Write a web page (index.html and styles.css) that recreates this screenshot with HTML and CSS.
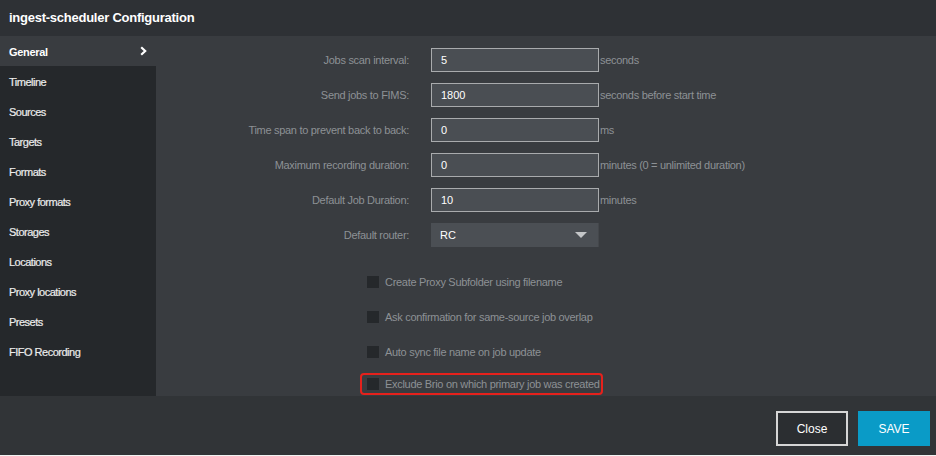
FILE: index.html
```html
<!DOCTYPE html>
<html>
<head>
<meta charset="utf-8">
<link rel="stylesheet" href="styles.css">
</head>
<body>
<div class="dialog">
  <header class="header">ingest-scheduler Configuration</header>
  <div class="main">
    <nav class="sidebar">
      <div class="nav-item active">General
        <svg class="chev" width="7" height="10" viewBox="0 0 7 10"><path d="M1.2 1.2 L5.2 5 L1.2 8.8" fill="none" stroke="#ffffff" stroke-width="2.2"/></svg>
      </div>
      <div class="nav-list">
        <div class="nav-item">Timeline</div>
        <div class="nav-item">Sources</div>
        <div class="nav-item">Targets</div>
        <div class="nav-item">Formats</div>
        <div class="nav-item">Proxy formats</div>
        <div class="nav-item">Storages</div>
        <div class="nav-item">Locations</div>
        <div class="nav-item">Proxy locations</div>
        <div class="nav-item">Presets</div>
        <div class="nav-item">FIFO Recording</div>
      </div>
    </nav>
    <section class="content">
      <div class="form">
        <label class="lbl">Jobs scan interval:</label>
        <div class="input">5</div>
        <span class="unit">seconds</span>

        <label class="lbl">Send jobs to FIMS:</label>
        <div class="input">1800</div>
        <span class="unit">seconds before start time</span>

        <label class="lbl">Time span to prevent back to back:</label>
        <div class="input">0</div>
        <span class="unit">ms</span>

        <label class="lbl">Maximum recording duration:</label>
        <div class="input">0</div>
        <span class="unit">minutes (0 = unlimited duration)</span>

        <label class="lbl">Default Job Duration:</label>
        <div class="input">10</div>
        <span class="unit">minutes</span>

        <label class="lbl">Default router:</label>
        <div class="select">RC<span class="caret"></span></div>
        <span class="unit"></span>
      </div>
      <div class="checks">
        <div class="check"><span class="box"></span>Create Proxy Subfolder using filename</div>
        <div class="check"><span class="box"></span>Ask confirmation for same-source job overlap</div>
        <div class="check"><span class="box"></span>Auto sync file name on job update</div>
        <div class="check highlight"><span class="box"></span>Exclude Brio on which primary job was created</div>
      </div>
    </section>
  </div>
  <footer class="footer">
    <button class="btn btn-close">Close</button>
    <button class="btn btn-save">SAVE</button>
  </footer>
</div>
</body>
</html>
```

FILE: styles.css
```css
* { box-sizing: border-box; }
html, body { margin: 0; padding: 0; }
body {
  width: 936px;
  height: 456px;
  background: #f2f2f2;
  font-family: "Liberation Sans", Arial, sans-serif;
  overflow: hidden;
}
.dialog {
  width: 936px;
  height: 455px;
  display: flex;
  flex-direction: column;
  background: #313437;
}
.header {
  height: 36px;
  flex: none;
  background: #2e3135;
  color: #ffffff;
  font-size: 13px;
  font-weight: bold;
  padding: 0 0 1px 9px;
  display: flex;
  align-items: center;
  letter-spacing: -0.25px;
}
.main {
  height: 360px;
  flex: none;
  display: flex;
  background: #393c40;
}
.sidebar {
  width: 156px;
  flex: none;
  display: flex;
  flex-direction: column;
}
.nav-list {
  flex: 1;
  background: #25282b;
}
.nav-item {
  height: 30px;
  display: flex;
  align-items: center;
  padding: 2px 0 0 9px;
  color: #ececec;
  font-size: 11px;
  letter-spacing: -0.5px;
  -webkit-text-stroke: 0.2px #ececec;
}
.nav-item.active {
  background: #393c40;
  color: #ffffff;
  font-weight: bold;
  letter-spacing: -0.3px;
  -webkit-text-stroke: 0;
  justify-content: space-between;
  padding-right: 9px;
}
.chev { margin-top: -2px; }
.content {
  flex: 1;
  padding-top: 12px;
}
.form {
  display: grid;
  grid-template-columns: 253px 168px auto;
  row-gap: 11px;
  align-items: center;
}
.lbl {
  text-align: right;
  color: #8d9195;
  font-size: 11px;
  letter-spacing: -0.3px;
  justify-self: end;
}
.form .input, .form .select { margin-left: 22px; }
.input {
  width: 168px;
  height: 24px;
  background: #4a4e53;
  border: 1px solid #a9abad;
  color: #ffffff;
  font-size: 11px;
  padding-left: 9px;
  display: flex;
  align-items: center;
}
.select {
  width: 168px;
  height: 24px;
  background: #4b4f54;
  border-right: 1px solid #44474b;
  color: #ffffff;
  font-size: 11px;
  padding-left: 9px;
  display: flex;
  align-items: center;
  justify-content: space-between;
  padding-right: 11px;
}
.caret {
  width: 0;
  height: 0;
  border-left: 6px solid transparent;
  border-right: 6px solid transparent;
  border-top: 6px solid #c4c6c8;
}
.unit {
  color: #8d9195;
  font-size: 11px;
  letter-spacing: -0.3px;
  margin-left: 23px;
}
.checks {
  display: flex;
  flex-direction: column;
  padding-left: 211px;
  margin-top: 28px;
}
.check {
  height: 13px;
  display: flex;
  align-items: center;
  color: #8d9195;
  font-size: 11px;
  letter-spacing: -0.3px;
  white-space: nowrap;
  margin-bottom: 22px;
}
.check:nth-child(3) { margin-bottom: 15px; }
.box {
  width: 12px;
  height: 12px;
  background: #25282b;
  margin-right: 6px;
  flex: none;
}
.highlight {
  margin-left: -7px;
  width: 243px;
  height: 22px;
  padding-left: 5px;
  border: 2px solid #e5211c;
  border-radius: 4px;
}
.footer {
  flex: 1;
  background: #313437;
  display: flex;
  justify-content: flex-end;
  align-items: flex-start;
  padding: 15px 6px 0 0;
  gap: 10px;
}
.btn {
  height: 35px;
  font-family: "Liberation Sans", Arial, sans-serif;
  font-size: 12px;
  color: #ffffff;
  cursor: pointer;
}
.btn-close {
  width: 72px;
  background: #2b2e31;
  border: 2px solid #d6d6d6;
}
.btn-save {
  width: 72px;
  background: #0a9bc7;
  border: none;
}
```
